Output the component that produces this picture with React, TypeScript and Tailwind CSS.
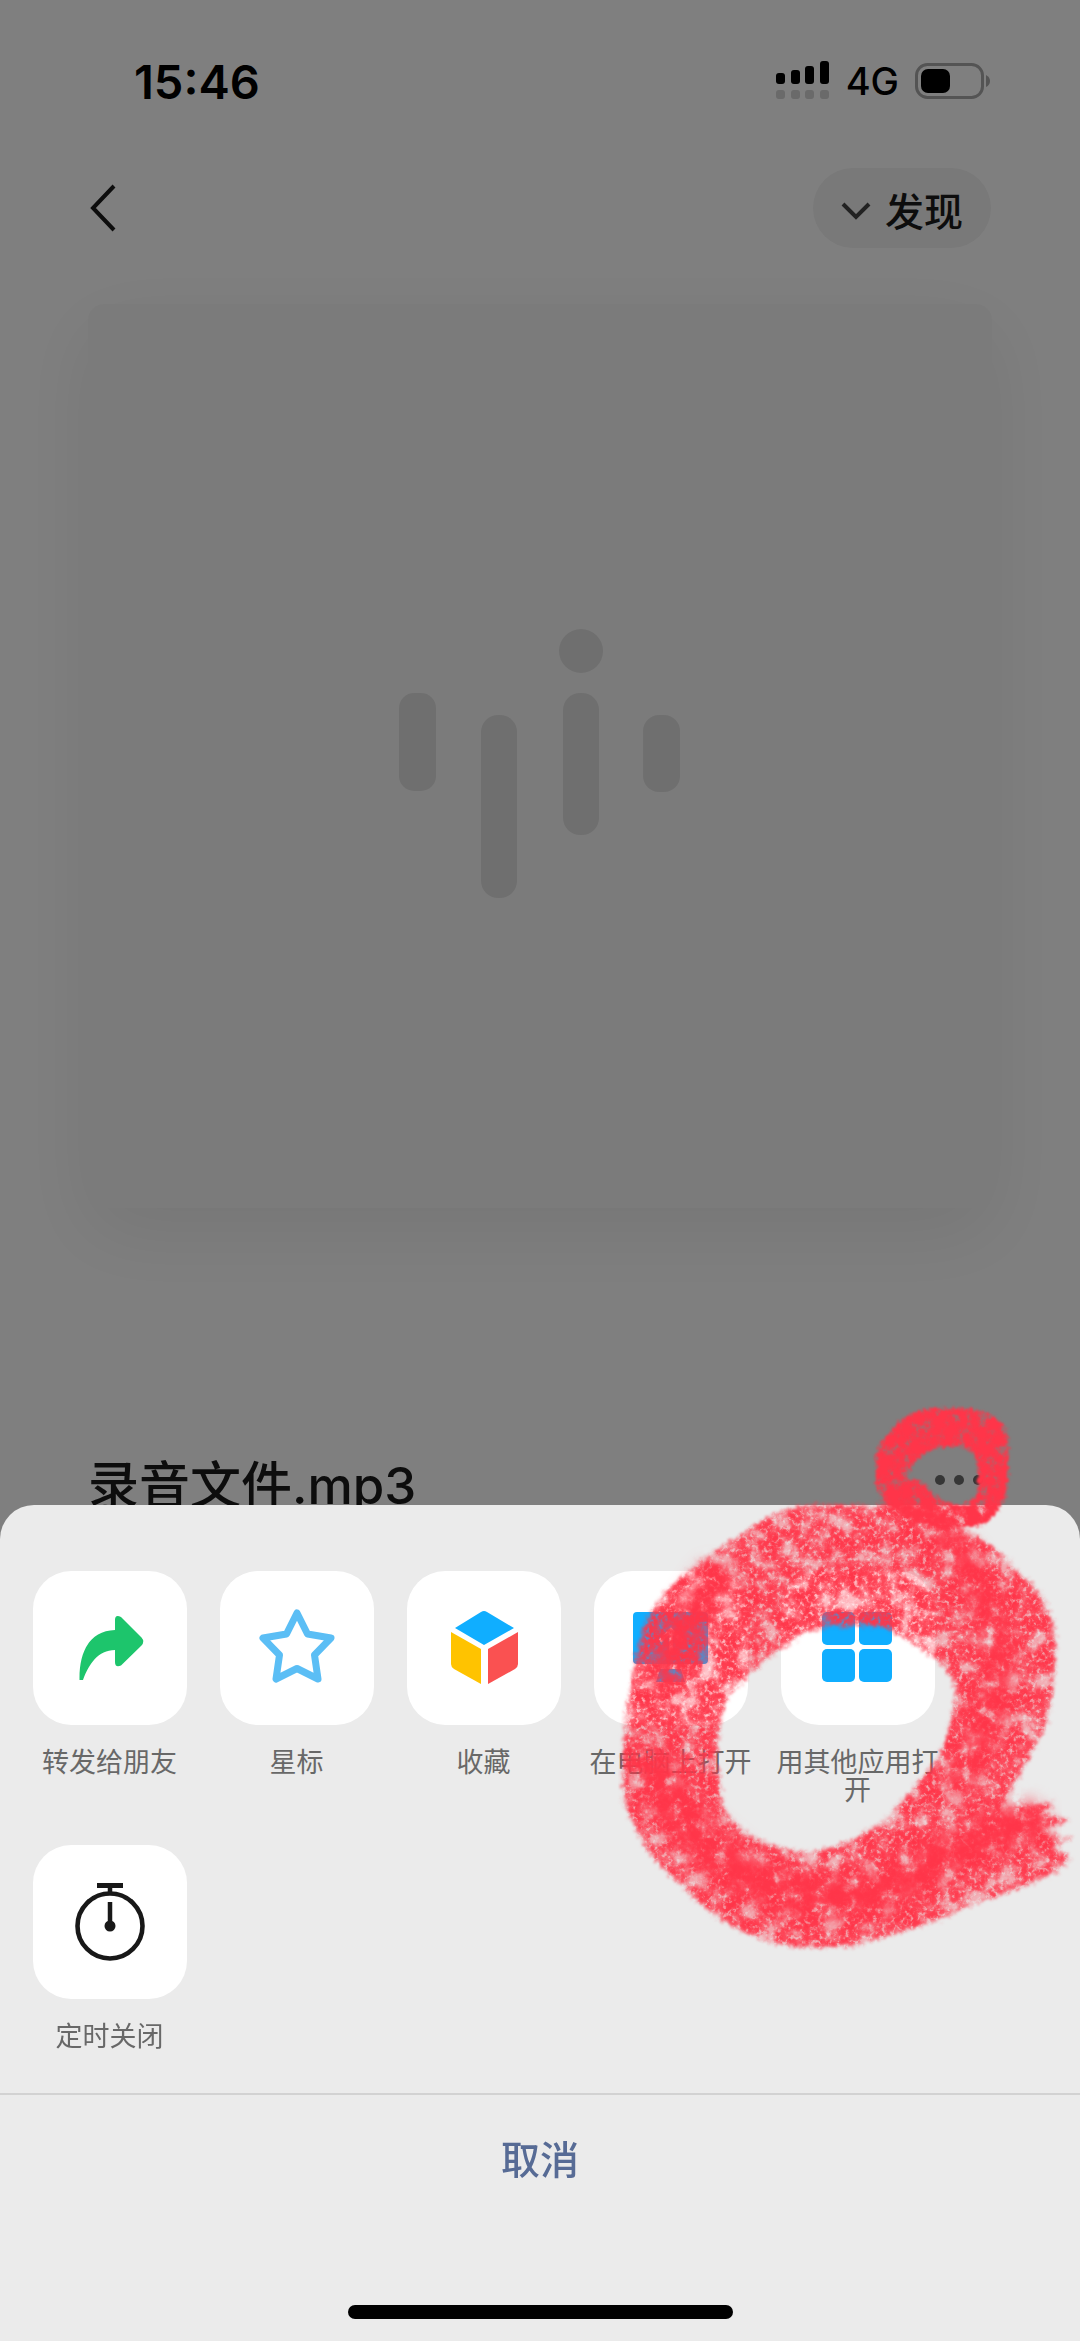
import React from 'react';

interface SheetAction {
    label: string;
    icon: React.ReactNode;
}

const ForwardIcon = () => (
    <svg viewBox="0 0 154 154" className="w-full h-full" aria-hidden="true">
        <path
            d="M82 49 Q82 43 88 46 L108.500 66.500 Q112 70.500 108.500 74.500 L88 94.500 Q82 97 82 91 L82 79 C65 79 56 93 50 109 L46.500 109 C46 80 57 60 82 59 Z"
            fill="#1dc56c"
        />
    </svg>
);

const StarIcon = () => (
    <svg viewBox="0 0 154 154" className="w-full h-full" aria-hidden="true">
        <path
            d="M77 42 L87.500 63 L111 67 L94.500 84 L98 108 L77 97.500 L56 108 L59.500 84 L43 67 L66.500 63 Z"
            fill="none"
            stroke="#5bbef5"
            strokeWidth="7"
            strokeLinejoin="round"
        />
    </svg>
);

const CubeIcon = () => (
    <svg viewBox="0 0 154 154" className="w-full h-full" aria-hidden="true">
        <path d="M48 57 L74 41 Q77 39 80 41 L107 57 L77 74 Z" fill="#10aeff" />
        <path d="M44 61 L74 78 L74 113 L47 98 Q44 96 44 93 Z" fill="#ffc300" />
        <path d="M111 61 L81 78 L81 113 L108 98 Q111 96 111 93 Z" fill="#fa5151" />
    </svg>
);

const ComputerIcon = () => (
    <svg viewBox="0 0 154 154" className="w-full h-full" aria-hidden="true">
        <rect x="39" y="41" width="75" height="52" rx="4" fill="#10aeff" />
        <path d="M66 70 L77 59 L88 70 M77 59 L77 81" fill="none" stroke="#fff" strokeWidth="4" />
        <path d="M66 98 H87 L91 111 H62 Z" fill="#10aeff" />
    </svg>
);

const AppsIcon = () => (
    <svg viewBox="0 0 154 154" className="w-full h-full" fill="#10aeff" aria-hidden="true">
        <rect x="41" y="41" width="33" height="33" rx="5" />
        <rect x="78" y="41" width="33" height="33" rx="5" />
        <rect x="41" y="78" width="33" height="33" rx="5" />
        <rect x="78" y="78" width="33" height="33" rx="5" />
    </svg>
);

const TimerIcon = () => (
    <svg viewBox="0 0 154 154" className="w-full h-full" fill="none" stroke="#181818" aria-hidden="true">
        <circle cx="77" cy="81" r="32.500" strokeWidth="4.600" />
        <path d="M64 40.500 H90" strokeWidth="5" />
        <path d="M77 42 V49 M77 57 V80" strokeWidth="4.500" />
        <circle cx="77" cy="81" r="5.500" fill="#181818" stroke="none" />
    </svg>
);

const rows: SheetAction[][] = [
    [
        { label: '转发给朋友', icon: <ForwardIcon /> },
        { label: '星标', icon: <StarIcon /> },
        { label: '收藏', icon: <CubeIcon /> },
        { label: '在电脑上打开', icon: <ComputerIcon /> },
        { label: '用其他应用打开', icon: <AppsIcon /> },
    ],
    [{ label: '定时关闭', icon: <TimerIcon /> }],
];

const StatusBar = () => (
    <div className="flex items-center justify-between h-[66px] mt-12 pl-[134px] pr-[89px] text-black">
        <span className="text-[47px] leading-none font-semibold">15:46</span>
        <div className="flex items-center gap-4">
            <svg viewBox="0 0 54 40" className="w-[54px] h-10" aria-hidden="true">
                <rect x="0" y="12" width="9" height="11" rx="3" />
                <rect x="15" y="9" width="9" height="14" rx="3" />
                <rect x="29" y="5" width="9" height="18" rx="3" />
                <rect x="44" y="0" width="9" height="23" rx="3" />
                <g fill="#d4d4d4">
                    <rect x="0" y="29" width="9" height="9" rx="3" />
                    <rect x="15" y="29" width="9" height="9" rx="3" />
                    <rect x="29" y="29" width="9" height="9" rx="3" />
                    <rect x="44" y="29" width="9" height="9" rx="3" />
                </g>
            </svg>
            <span className="text-[38px] leading-none font-medium">4G</span>
            <svg viewBox="0 0 76 36" className="w-[76px] h-9" aria-hidden="true">
                <rect x="1.500" y="1.500" width="66" height="33" rx="11" fill="none" stroke="#a8a8a8" strokeWidth="3" />
                <rect x="6" y="6" width="29" height="24" rx="7" />
                <path d="M71 12 Q75 14 75 18 Q75 22 71 24 Z" fill="#a8a8a8" />
            </svg>
        </div>
    </div>
);

const AlbumCover = () => (
    <div className="mx-[88px] mt-14 aspect-square rounded-2xl bg-[#f7f7f7] shadow-[0_24px_80px_rgba(0,0,0,0.08)] flex items-center justify-center">
        <svg viewBox="0 0 282 272" className="w-[31.2%] mt-[2%]" fill="#dfdfdf" aria-hidden="true">
            <rect x="0" y="64" width="37" height="98" rx="15" />
            <rect x="82" y="86" width="36" height="183" rx="17" />
            <circle cx="182" cy="22" r="22" />
            <rect x="164" y="64" width="36" height="142" rx="17" />
            <rect x="244" y="86" width="37" height="77" rx="16" />
        </svg>
    </div>
);

// Chalk marker strokes circling the menu dots and the last action
const MarkerRings = () => (
    <svg
        viewBox="0 -100 480 570"
        className="absolute right-0 -top-[115px] w-[480px] h-[570px] pointer-events-none"
        fill="#ff3549"
        aria-hidden="true"
    >
        <defs>
            <filter id="chalk" x="-5%" y="-5%" width="110%" height="110%" colorInterpolationFilters="sRGB">
                <feTurbulence type="fractalNoise" baseFrequency="0.35" numOctaves="3" seed="4" result="edge" />
                <feDisplacementMap in="SourceGraphic" in2="edge" scale="14" xChannelSelector="R" yChannelSelector="G" result="rough" />
                <feGaussianBlur in="rough" stdDeviation="1.800" result="soft" />
                <feTurbulence type="fractalNoise" baseFrequency="0.05" numOctaves="5" seed="11" result="grain" />
                <feComponentTransfer in="grain" result="holes">
                    <feFuncA type="table" tableValues="0.2 0.25 0.3 0.4 0.68 0.88 0.96 0.98 1 1 1" />
                </feComponentTransfer>
                <feTurbulence type="fractalNoise" baseFrequency="0.22" numOctaves="3" seed="31" result="fine" />
                <feComponentTransfer in="fine" result="pores">
                    <feFuncA type="table" tableValues="0.2 0.3 0.4 0.55 0.82 0.96 1 1 1 1 1" />
                </feComponentTransfer>
                <feComposite in="soft" in2="holes" operator="in" result="patchy" />
                <feComposite in="patchy" in2="pores" operator="in" />
            </filter>
            <filter id="shade" x="-10%" y="-10%" width="120%" height="120%" colorInterpolationFilters="sRGB">
                <feGaussianBlur in="SourceGraphic" stdDeviation="9" result="soft" />
                <feTurbulence type="fractalNoise" baseFrequency="0.07" numOctaves="5" seed="23" result="grain" />
                <feComponentTransfer in="grain" result="holes">
                    <feFuncA type="table" tableValues="0 0 0 0.2 0.6 0.88 0.95 1 1 1 1" />
                </feComponentTransfer>
                <feComposite in="soft" in2="holes" operator="in" />
            </filter>
            <filter id="marker" x="-5%" y="-5%" width="110%" height="110%" colorInterpolationFilters="sRGB">
                <feTurbulence type="fractalNoise" baseFrequency="0.3" numOctaves="3" seed="7" result="edge" />
                <feDisplacementMap in="SourceGraphic" in2="edge" scale="9" xChannelSelector="R" yChannelSelector="G" result="rough" />
                <feGaussianBlur in="rough" stdDeviation="1" result="soft" />
                <feTurbulence type="fractalNoise" baseFrequency="0.09" numOctaves="4" seed="3" result="grain" />
                <feComponentTransfer in="grain" result="holes">
                    <feFuncA type="table" tableValues="0.3 0.3 0.35 0.6 0.88 0.97 1 1 1 1 1" />
                </feComponentTransfer>
                <feComposite in="soft" in2="holes" operator="in" />
            </filter>
        </defs>
        <path
            filter="url(#chalk)"
            fillRule="evenodd"
            d="M145 42 C165 28 185 17 210 15 L300 15 C325 18 345 28 358 38 C385 48 405 65 420 85 C440 98 452 118 455 150 C457 175 453 205 447 230 C438 258 415 285 401 322 C415 315 438 312 455 314 L440 323 L470 330 L440 341 L472 348 L452 357 L470 368 L456 382 C430 395 400 405 370 416 C340 430 310 440 280 448 C260 456 240 456 222 457 C200 457 180 456 168 452 C145 444 130 435 112 424 C98 410 88 402 78 392 C66 380 56 372 48 360 C38 342 32 330 26 318 C22 300 23 265 24 240 C26 215 31 195 35 175 C38 155 44 130 60 108 C80 85 115 60 145 42 Z
               M205 142 C225 136 260 133 285 137 C310 150 325 160 340 173 C352 185 357 195 355 207 C353 230 346 250 340 265 C325 285 310 305 290 324 C270 342 245 358 210 362 C190 362 160 355 142 340 C125 328 120 305 118 282 C116 260 118 235 126 212 C135 195 145 188 165 170 Z"
        />
        <g filter="url(#shade)" fill="none" stroke="#ff3549" strokeLinecap="round">
            <path strokeWidth="44" d="M55 280 C75 325 105 360 150 388 C195 410 240 412 285 400 C320 385 345 360 375 350 L425 335" />
            <path strokeWidth="36" d="M115 92 C95 120 75 150 68 185" />
            <path strokeWidth="30" d="M345 50 C375 80 392 120 398 165 C400 200 392 240 360 290" />
        </g>
        <path
            filter="url(#marker)"
            fillRule="evenodd"
            d="M276 -28 C277 -42 281 -50 290 -58 C300 -70 308 -77 322 -80 C340 -84 362 -83 378 -79 C392 -77 404 -69 408 -57 L408 -23 C408 0 406 15 393 26 C385 36 378 37 366 37 C350 40 320 35 308 28 C290 20 278 8 276 -6 Z
               M308 -14 C311 -28 322 -40 345 -43 C355 -44 366 -42 373 -39 C378 -28 379 -12 377 3 C374 12 366 15 355 14 C340 11 334 5 328 -2 C322 -9 314 -12 308 -10 Z"
        />
    </svg>
);

const ActionSheet = () => (
    <section
        aria-label="更多操作"
        className="fixed inset-x-0 bottom-0 rounded-t-[34px] bg-[#ebebeb] flex flex-col"
    >
        <div className="flex flex-col gap-10 px-4 pt-[66px] pb-[14px]">
            {rows.map((row, i) => (
                <div key={i} className="flex items-start">
                    {row.map((action) => (
                        <button key={action.label} className="w-[187px] h-[234px] flex flex-col items-center">
                            <span className="w-[154px] h-[154px] rounded-[38px] bg-white">{action.icon}</span>
                            <span className="mt-6 w-[164px] text-[27px] leading-7 text-center text-[#686868]">
                                {action.label}
                            </span>
                        </button>
                    ))}
                </div>
            ))}
        </div>
        <button className="h-[133px] border-t-2 border-[#d2d2d2] text-[39px] font-medium text-[#576b95]">取消</button>
        <div className="w-[385px] h-[14px] mt-[79px] mb-[22px] mx-auto rounded-full bg-black" />
        <MarkerRings />
    </section>
);

export default function App() {
    return (
        <div className="min-h-screen overflow-hidden bg-white font-[Inter,'Noto_Sans_CJK_SC',sans-serif]">
            <StatusBar />

            <header className="flex items-center justify-between mt-[54px] px-[89px]">
                <button aria-label="返回" className="h-20">
                    <svg viewBox="0 0 28 48" className="w-7 h-12" fill="none" stroke="#1a1a1a" strokeWidth="4" aria-hidden="true">
                        <path d="M25 2 L4 24 L25 46" />
                    </svg>
                </button>
                <button className="flex items-center gap-[14px] h-20 pl-7 pr-7 pt-2 rounded-full bg-[#f2f2f2] text-[39px] font-medium text-[#1a1a1a]">
                    <svg viewBox="0 0 30 20" className="w-[30px] h-5" fill="none" stroke="#444" strokeWidth="4" aria-hidden="true">
                        <path d="M2 2 L15 15 L28 2" />
                    </svg>
                    发现
                </button>
            </header>

            <AlbumCover />

            <div className="flex items-center justify-between mt-[248px] px-[88px]">
                <h1 className="text-[51px] leading-[60px] font-medium text-[#1a1a1a]">录音文件.mp3</h1>
                <button aria-label="更多">
                    <svg viewBox="0 0 60 60" className="w-[60px] h-[60px]" fill="#6c6c6c" aria-hidden="true">
                        <circle cx="8" cy="24" r="5" />
                        <circle cx="27" cy="24" r="5" />
                        <circle cx="46" cy="24" r="5" />
                    </svg>
                </button>
            </div>

            <div className="fixed inset-0 bg-black/50" />
            <ActionSheet />
        </div>
    );
}
